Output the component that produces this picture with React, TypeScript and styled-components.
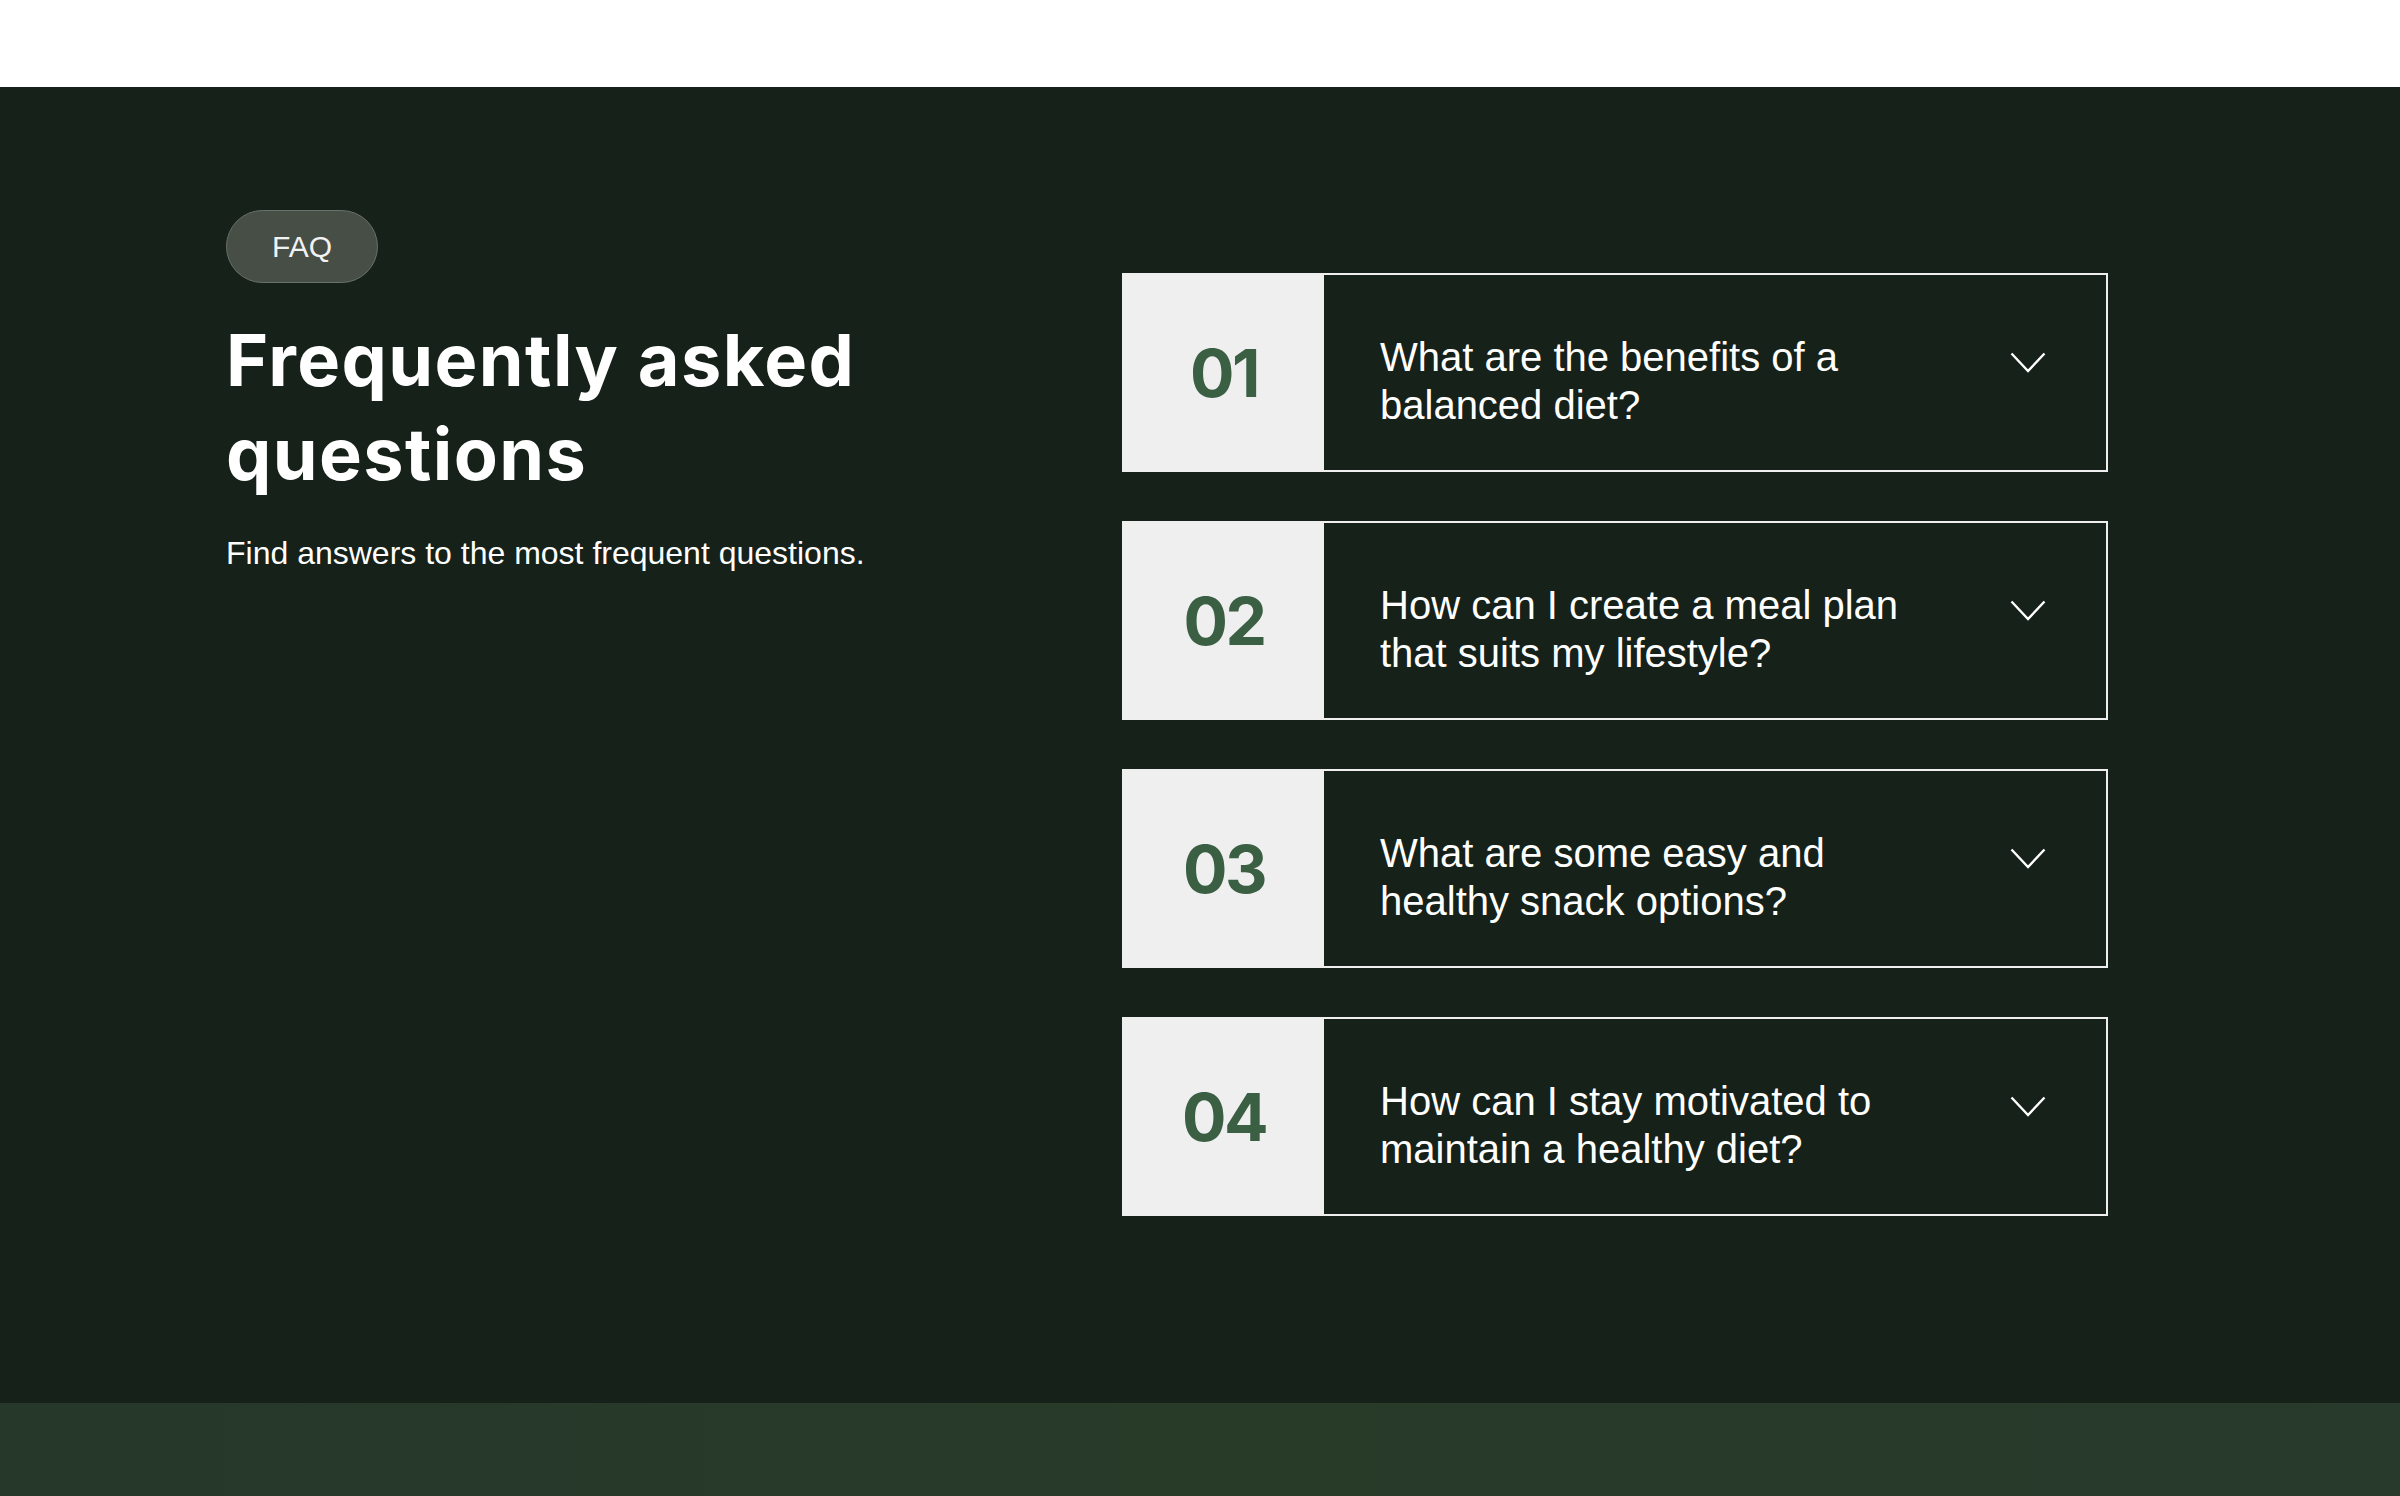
import styled, { createGlobalStyle } from 'styled-components';

const GlobalStyle = createGlobalStyle`
  html, body {
    margin: 0;
    padding: 0;
    background: #ffffff;
  }
  * {
    box-sizing: border-box;
  }
`;

const faqs = [
  { num: '01', question: 'What are the benefits of a balanced diet?' },
  { num: '02', question: 'How can I create a meal plan that suits my lifestyle?' },
  { num: '03', question: 'What are some easy and healthy snack options?' },
  { num: '04', question: 'How can I stay motivated to maintain a healthy diet?' },
];

const Chevron = () => (
  <svg width="36" height="21" viewBox="0 0 36 21" fill="none">
    <path d="M1.5 1.5 L18 19 L34.5 1.5" stroke="#ffffff" strokeWidth="2.4" />
  </svg>
);

export default function App() {
  return (
    <>
      <GlobalStyle />
      <TopBar />
      <Section>
        <Intro>
          <Pill>FAQ</Pill>
          <Heading>
            Frequently asked
            <br />
            questions
          </Heading>
          <Subtitle>Find answers to the most frequent questions.</Subtitle>
        </Intro>

        <List>
          {faqs.map((f) => (
            <Item key={f.num}>
              <NumberCell>{f.num}</NumberCell>
              <QuestionArea>
                <Question>{f.question}</Question>
                <ChevronBox>
                  <Chevron />
                </ChevronBox>
              </QuestionArea>
            </Item>
          ))}
        </List>
      </Section>
      <BottomBand />
    </>
  );
}

const TopBar = styled.header`
  height: 87px;
  background: #ffffff;
`;

const Section = styled.section`
  height: 1316px;
  background: #152119;
  padding: 123px 0 0 226px;
  display: grid;
  grid-template-columns: 720px 986px;
  column-gap: 176px;
  align-items: start;
`;

const Intro = styled.div`
  display: flex;
  flex-direction: column;
  align-items: flex-start;
`;

const Pill = styled.div`
  display: inline-flex;
  align-items: center;
  justify-content: center;
  width: 152px;
  height: 73px;
  border-radius: 999px;
  background: #464e46;
  border: 1px solid #6a706a;
  color: #f2f2f2;
  font-family: 'Liberation Sans', Arial, sans-serif;
  font-size: 30px;
`;

const Heading = styled.h2`
  margin: 30px 0 0;
  color: #ffffff;
  font-family: Inter, 'Noto Sans', sans-serif;
  font-weight: 700;
  font-size: 72px;
  line-height: 93.6px;
  letter-spacing: 1.4px;
`;

const Subtitle = styled.p`
  margin: 31px 0 0;
  color: #ffffff;
  font-family: 'Liberation Sans', Arial, sans-serif;
  font-size: 32px;
  line-height: 44.8px;
`;

const List = styled.div`
  margin-top: 63px;
  display: flex;
  flex-direction: column;
  gap: 49px;
`;

const Item = styled.div`
  display: flex;
  height: 199px;
  border: 2px solid #efefef;
`;

const NumberCell = styled.div`
  flex: 0 0 200px;
  display: flex;
  align-items: center;
  justify-content: center;
  background: #efefef;
  color: #3a5f43;
  font-family: Inter, 'Noto Sans', sans-serif;
  font-weight: 700;
  font-size: 66px;
  letter-spacing: -2.5px;
`;

const QuestionArea = styled.div`
  flex: 1;
  display: flex;
  align-items: center;
  justify-content: space-between;
  padding: 0 60px 0 56px;
`;

const Question = styled.div`
  max-width: 560px;
  padding-top: 16px;
  color: #ffffff;
  font-family: 'Liberation Sans', Arial, sans-serif;
  font-size: 40px;
  line-height: 48px;
`;

const ChevronBox = styled.div`
  display: flex;
  margin-bottom: 20px;
`;

const BottomBand = styled.div`
  height: 93px;
  background: linear-gradient(90deg, #26382a 0%, #283b29 50%, #273a2b 100%);
`;
